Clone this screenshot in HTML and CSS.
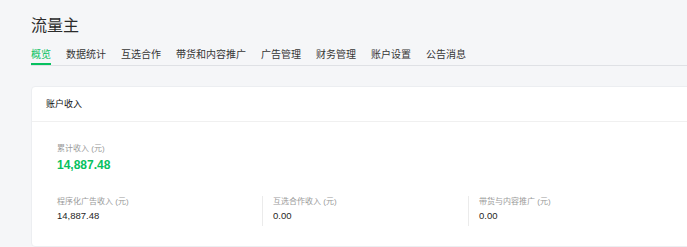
FILE: index.html
```html
<!DOCTYPE html>
<html lang="zh-CN">
<head>
    <meta charset="UTF-8">
    <meta name="viewport" content="width=device-width, initial-scale=1.0">
    <title>流量主</title>
    <link rel="stylesheet" href="styles.css">
</head>
<body>
    <div class="page">
        <h1 class="page-title">流量主</h1>

        <nav class="tabs">
            <a class="tab active">概览</a>
            <a class="tab">数据统计</a>
            <a class="tab">互选合作</a>
            <a class="tab">带货和内容推广</a>
            <a class="tab">广告管理</a>
            <a class="tab">财务管理</a>
            <a class="tab">账户设置</a>
            <a class="tab">公告消息</a>
        </nav>

        <div class="card">
            <div class="card-head">账户收入</div>
            <div class="card-body">
                <div class="total">
                    <div class="stat-label">累计收入 (元)</div>
                    <div class="total-value">14,887.48</div>
                </div>

                <div class="stats">
                    <div class="stat">
                        <div class="stat-label">程序化广告收入 (元)</div>
                        <div class="stat-value">14,887.48</div>
                    </div>
                    <div class="stat">
                        <div class="stat-label">互选合作收入 (元)</div>
                        <div class="stat-value">0.00</div>
                    </div>
                    <div class="stat">
                        <div class="stat-label">带货与内容推广 (元)</div>
                        <div class="stat-value">0.00</div>
                    </div>
                </div>
            </div>
        </div>
    </div>
</body>
</html>
```

FILE: styles.css
```css
/* 流量主 概览 */
body {
    margin: 0;
    background-color: #f5f6f8;
    font-family: "Liberation Sans", "Noto Sans CJK SC", sans-serif;
    color: #333;
    overflow: hidden;
}

.page {
    padding: 16px 0 0 31px;
}

.page-title {
    margin: 0;
    font-size: 16px;
    line-height: 20px;
    font-weight: normal;
    color: #2b2b2b;
}

.tabs {
    display: flex;
    margin-top: 11px;
    border-bottom: 1px solid #dfe1e5;
}

.tab {
    font-size: 10px;
    line-height: 14px;
    padding: 1px 0 1px;
    margin-right: 15px;
    border-bottom: 2px solid transparent;
    color: #353535;
    cursor: pointer;
}

.tab.active {
    color: #07c160;
    border-bottom-color: #07c160;
}

.card {
    width: 680px;
    margin-top: 20px;
    background-color: #ffffff;
    border: 1px solid #eceef1;
    border-radius: 4px;
}

.card-head {
    height: 34px;
    line-height: 34px;
    padding-left: 14px;
    font-size: 9px;
    color: #111;
    border-bottom: 1px solid #f0f0f0;
}

.card-body {
    padding: 21px 0 20px 25px;
}

.stat-label {
    font-size: 8px;
    line-height: 12px;
    color: #9a9a9a;
}

.total-value {
    margin-top: 2px;
    font-size: 12px;
    line-height: 16px;
    font-weight: bold;
    color: #07c160;
}

.stats {
    display: flex;
    margin-top: 23px;
}

.stat {
    width: 206px;
    box-sizing: border-box;
    padding: 0 0 2px 10px;
    border-left: 1px solid #ebebeb;
}

.stat:first-child {
    width: 205px;
    padding-left: 0;
    border-left: none;
}

.stat-value {
    font-size: 9.5px;
    line-height: 16px;
    color: #1f1f1f;
}
```
